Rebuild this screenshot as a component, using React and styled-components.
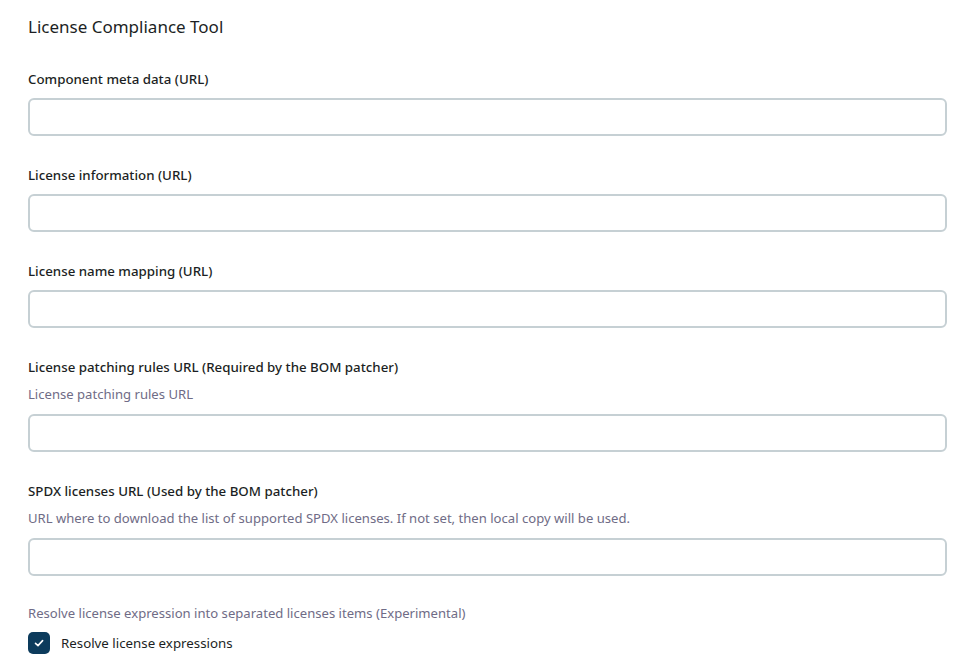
import { useState } from 'react'
import styled, { createGlobalStyle } from 'styled-components'

const fields = [
  { label: 'Component meta data (URL)' },
  { label: 'License information (URL)' },
  { label: 'License name mapping (URL)' },
  {
    label: 'License patching rules URL (Required by the BOM patcher)',
    hint: 'License patching rules URL',
  },
  {
    label: 'SPDX licenses URL (Used by the BOM patcher)',
    hint: 'URL where to download the list of supported SPDX licenses. If not set, then local copy will be used.',
  },
]

export default function App() {
  const [values, setValues] = useState(fields.map(() => ''))
  const [resolve, setResolve] = useState(true)

  const onChangeHandler = (e, idx) => {
    const next = [...values]
    next[idx] = e.target.value
    setValues(next)
  }

  return (
    <>
      <GlobalStyle />
      <Page>
        <Title>License Compliance Tool</Title>
        {fields.map((f, i) => (
          <Field key={f.label}>
            <Label hasHint={!!f.hint}>{f.label}</Label>
            {f.hint && <Hint>{f.hint}</Hint>}
            <TextInput
              type="text"
              value={values[i]}
              onChange={(e) => onChangeHandler(e, i)}
            />
          </Field>
        ))}
        <Field offset={-2}>
          <Hint>Resolve license expression into separated licenses items (Experimental)</Hint>
          <CheckRow onClick={() => setResolve(!resolve)}>
            <CheckBox checked={resolve}>
              {resolve && (
                <svg width="12" height="12" viewBox="0 0 12 12" fill="none">
                  <path
                    d="M2.5 6.3 L5 8.6 L9.6 3.6"
                    stroke="#fff"
                    strokeWidth="1.6"
                    strokeLinecap="round"
                    strokeLinejoin="round"
                  />
                </svg>
              )}
            </CheckBox>
            <CheckLabel>Resolve license expressions</CheckLabel>
          </CheckRow>
        </Field>
      </Page>
    </>
  )
}

const GlobalStyle = createGlobalStyle`
  body {
    margin: 0;
    background: #ffffff;
    font-family: "Noto Sans", "Open Sans", sans-serif;
  }
`

const Page = styled.div`
  display: flex;
  flex-direction: column;
  padding: 15px 11px 0 28px;
`

const Title = styled.h1`
  margin: 0 0 30px;
  font-size: 17px;
  line-height: 24px;
  font-weight: 400;
  color: #1c1f24;
`

const Field = styled.div`
  display: flex;
  flex-direction: column;
  margin-top: ${({ offset }) => offset || 0}px;
  margin-bottom: 29px;
`

const Label = styled.label`
  font-size: 13.3px;
  line-height: 20px;
  font-weight: 500;
  color: #1c1f24;
  margin-bottom: ${({ hasHint }) => (hasHint ? '7px' : '9px')};
`

const Hint = styled.div`
  font-size: 13.1px;
  line-height: 20px;
  color: #6f6c86;
  margin-bottom: 10px;
`

const TextInput = styled.input`
  box-sizing: border-box;
  width: 100%;
  height: 38px;
  border: 2px solid #c6d0d4;
  border-radius: 6px;
  padding: 0 10px;
  font-size: 13px;
  outline: none;
  background: #fff;
`

const CheckRow = styled.div`
  display: flex;
  align-items: center;
  gap: 11px;
  margin-top: -1px;
  cursor: pointer;
`

const CheckBox = styled.span`
  display: flex;
  align-items: center;
  justify-content: center;
  width: 22px;
  height: 22px;
  border-radius: 5px;
  box-sizing: border-box;
  background: ${({ checked }) => (checked ? '#0c3b5c' : '#fff')};
  border: ${({ checked }) => (checked ? 'none' : '2px solid #c6d0d4')};
`

const CheckLabel = styled.span`
  font-size: 13.3px;
  line-height: 20px;
  color: #1c1f24;
`
